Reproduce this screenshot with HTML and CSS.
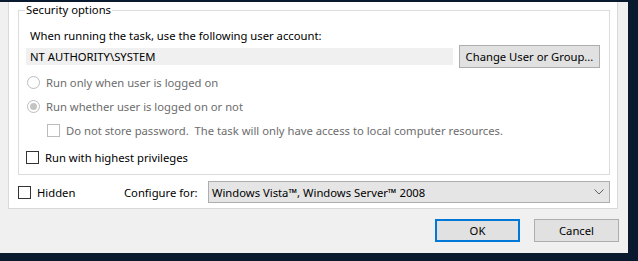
FILE: index.html
```html
<!DOCTYPE html>
<html lang="en">
  <head>
    <meta charset="UTF-8" />
    <meta name="viewport" content="width=device-width, initial-scale=1.0" />
    <title>Task Properties</title>
    <link rel="stylesheet" href="styles.css">
  </head>
  <body>
    <div class="window">
      <div class="tab-page">
        <fieldset class="group">
          <legend>Security options</legend>
          <div class="row row-label">When running the task, use the following user account:</div>
          <div class="row row-account">
            <div class="account-field">NT AUTHORITY\SYSTEM</div>
            <button type="button" class="btn btn-change">Change User or Group...</button>
          </div>
          <div class="row option option-first disabled">
            <span class="radio"></span>
            <span>Run only when user is logged on</span>
          </div>
          <div class="row option disabled">
            <span class="radio checked"></span>
            <span>Run whether user is logged on or not</span>
          </div>
          <div class="row option sub disabled">
            <span class="check"></span>
            <span>Do not store password.&nbsp; The task will only have access to local computer resources.</span>
          </div>
          <div class="row option option-priv">
            <span class="check"></span>
            <span>Run with highest privileges</span>
          </div>
        </fieldset>
        <div class="config-row">
          <div class="option hidden-opt">
            <span class="check"></span>
            <span>Hidden</span>
          </div>
          <span class="config-label">Configure for:</span>
          <div class="combo">
            <span>Windows Vista™, Windows Server™ 2008</span>
            <svg width="10" height="6" viewBox="0 0 10 6">
              <path d="M0.5 0.5 L5 5 L9.5 0.5" fill="none" stroke="#606060" stroke-width="1" />
            </svg>
          </div>
        </div>
      </div>
      <div class="dialog-buttons">
        <button type="button" class="btn btn-dialog btn-default">OK</button>
        <button type="button" class="btn btn-dialog">Cancel</button>
      </div>
    </div>
  </body>
</html>
```

FILE: styles.css
```css
body {
  margin: 0;
  background-color: #0a1a2e;
  font-family: "Noto Sans", "Open Sans", sans-serif;
  font-size: 11.25px;
  color: #000;
}

.window {
  width: 628px;
  height: 251px;
  background-color: #f0f0f0;
  box-sizing: border-box;
}

.tab-page {
  margin-left: 8px;
  width: 610px;
  background-color: #fff;
  border: 1px solid #d9d9d9;
  border-top: none;
  box-sizing: border-box;
  padding-bottom: 5px;
}

.group {
  margin: 2px 7px 0 9px;
  padding: 0 9px 8px 7px;
  border: 1px solid #dcdcdc;
  min-width: 0;
}

.group legend {
  padding: 0 1px;
  margin-left: -1px;
  line-height: 16px;
}

.row {
  display: flex;
  align-items: center;
}

.row-label {
  height: 18px;
  margin-top: 8px;
  padding-left: 4px;
}

.row-account {
  height: 23px;
  margin-top: 1px;
}

.account-field {
  flex: 1;
  height: 17px;
  line-height: 17px;
  background-color: #f0f0f0;
  padding-left: 4px;
  margin-right: 6px;
}

.btn {
  font-family: inherit;
  font-size: 11.25px;
  color: #000;
  background-color: #e1e1e1;
  border: 1px solid #adadad;
  border-radius: 0;
  padding: 0;
  height: 23px;
  box-sizing: border-box;
}

.btn-change {
  width: 141px;
}

.option {
  display: flex;
  align-items: center;
  height: 18px;
  gap: 6px;
}

.option-first {
  margin-top: 5px;
  padding-left: 1px;
}

.option + .option {
  margin-top: 6px;
}

.option-first + .option {
  padding-left: 1px;
}

.sub {
  padding-left: 21px;
}

.group .option-priv {
  margin-top: 9px;
}

.disabled {
  color: #6d6d6d;
}

.radio {
  width: 13px;
  height: 13px;
  border: 1px solid #bcbcbc;
  border-radius: 50%;
  box-sizing: border-box;
  display: flex;
  align-items: center;
  justify-content: center;
  background-color: #fff;
}

.radio.checked::after {
  content: "";
  width: 7px;
  height: 7px;
  border-radius: 50%;
  background-color: #c4c4c4;
}

.check {
  width: 13px;
  height: 13px;
  border: 1px solid #333;
  box-sizing: border-box;
  background-color: #fff;
}

.disabled .check {
  border-color: #bcbcbc;
}

.config-row {
  display: flex;
  align-items: center;
  height: 22px;
  margin-top: 6px;
  padding-left: 9px;
}

.hidden-opt {
  width: 106px;
}

.config-label {
  width: 84px;
}

.combo {
  width: 402px;
  height: 22px;
  box-sizing: border-box;
  border: 1px solid #adadad;
  background-color: #e5e5e5;
  display: flex;
  align-items: center;
  justify-content: space-between;
  padding: 0 5px 0 3px;
}

.dialog-buttons {
  display: flex;
  justify-content: flex-end;
  gap: 14px;
  margin-top: 10px;
  padding-right: 9px;
}

.btn-dialog {
  width: 85px;
}

.btn-default {
  border: 2px solid #0078d7;
}
```
